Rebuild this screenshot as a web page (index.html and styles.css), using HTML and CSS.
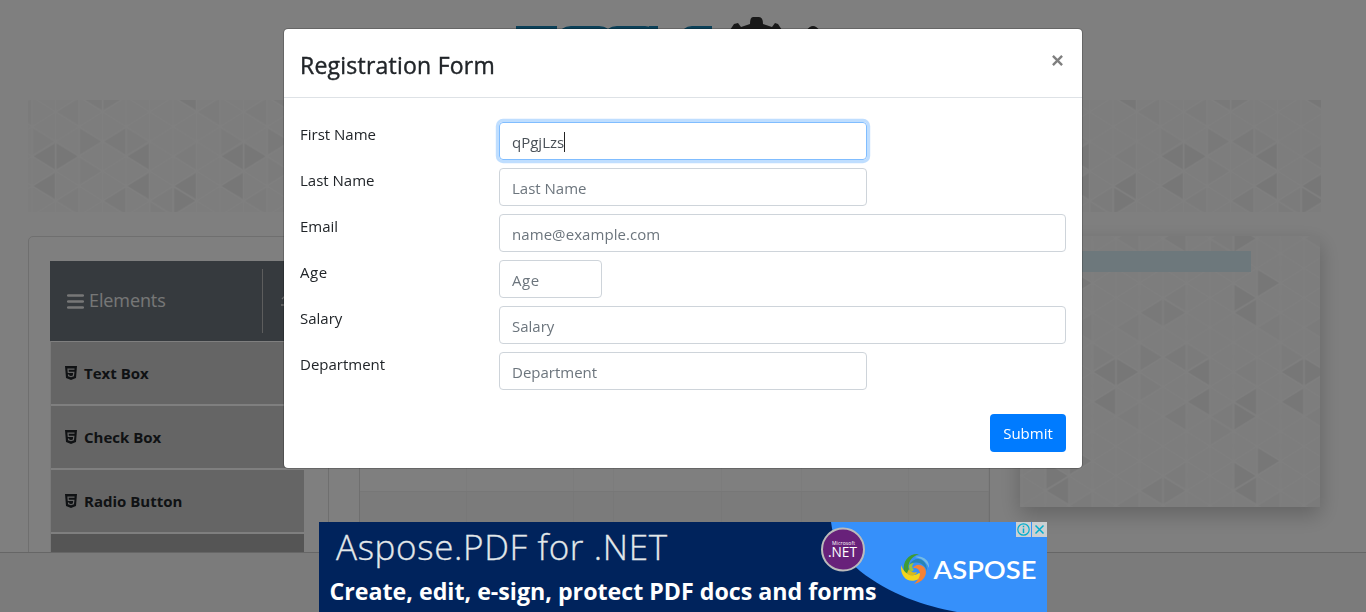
FILE: index.html
```html
<!DOCTYPE html>
<html lang="en">
<head>
<meta charset="utf-8">
<title>Web Tables</title>
<link rel="stylesheet" href="styles.css">
</head>
<body>
<svg class="defs" width="0" height="0" aria-hidden="true">
  <defs>
    <path id="tl" d="M1 0L22.7-12.800V12.800Z"/>
    <path id="tr" d="M-1 0L-22.700-12.800V12.800Z"/>
    <g id="tile">
      <g fill="#eeeeee">
        <use href="#tl" x="0" y="103.83"/><use href="#tr" x="47" y="103.83"/>
        <use href="#tl" x="0" y="133.5"/><use href="#tl" x="94" y="103.83"/>
        <use href="#tl" x="94" y="133.5"/><use href="#tl" x="141" y="133.5"/>
        <use href="#tr" x="164.5" y="148.33"/><use href="#tl" x="141" y="44.5"/>
        <use href="#tr" x="164.5" y="29.67"/><use href="#tr" x="188" y="14.83"/>
      </g>
      <g fill="#f2f2f2">
        <use href="#tl" x="70.5" y="148.33"/><use href="#tl" x="70.5" y="89"/>
        <use href="#tr" x="70.5" y="89"/><use href="#tl" x="47" y="44.5"/>
        <use href="#tr" x="94" y="44.5"/>
      </g>
      <g fill="#f7f7f7">
        <use href="#tl" x="70.5" y="29.67"/><use href="#tl" x="23.5" y="59.33"/>
        <use href="#tr" x="23.5" y="89"/><use href="#tr" x="117.5" y="89"/>
        <use href="#tl" x="141" y="103.83"/><use href="#tr" x="70.5" y="118.67"/>
        <use href="#tl" x="117.5" y="148.33"/><use href="#tl" x="23.5" y="148.33"/>
        <use href="#tl" x="164.5" y="59.33"/><use href="#tr" x="141" y="163.17"/>
      </g>
    </g>
    <pattern id="p1" width="188" height="178" patternUnits="userSpaceOnUse" patternTransform="translate(4.2 -47.5)"><use href="#tile"/></pattern>
    <pattern id="p2" width="188" height="178" patternUnits="userSpaceOnUse" patternTransform="translate(72.5 32.2)"><use href="#tile"/></pattern>
    <g id="mesh" fill="none" stroke="#ffffff" stroke-width="1.2"><path d="M0 14.83L23.5 0L47 14.83L23.5 29.67ZM0 0V29.67M47 0V29.67M23.5 0V29.67"/></g>
    <pattern id="m1" width="47" height="29.667" patternUnits="userSpaceOnUse" patternTransform="translate(4.2 -47.5)"><use href="#mesh"/></pattern>
    <pattern id="m2" width="47" height="29.667" patternUnits="userSpaceOnUse" patternTransform="translate(72.5 32.2)"><use href="#mesh"/></pattern>
    <symbol id="html5" viewBox="0 0 12 14"><path fill="#212529" d="M0 0H12L11 12L6 14L1 12Z"/><path fill="none" stroke="#cacaca" stroke-width="1.2" d="M9.500 3.200H3L3.300 6.400H8.800L8.400 9.800L6 10.700L3.600 9.800L3.500 8.500"/></symbol>
  </defs>
</svg>

<div class="page">
  <header class="top">
    <svg class="logo" width="310" height="60" viewBox="0 0 310 60">
      <path fill="#1680b0" d="M1 10H42V18H1ZM44 34V20Q45 10 56 10H84Q95 10 96 20V34ZM90 34V20Q91 10 102 10H130Q141 10 142 20V34ZM134 10H143V34H134ZM167 34V20Q167 10 177 10H197V18H197V34Z"/>
      <path fill="#333" d="M235 8Q235 1 238 1H244Q248 1 248 8L257 11L260 7L263 8L267 14H215L219 8L223 7L226 11L235 8ZM217 13H267V40H217ZM291 15Q298 5 305 15L315 40H281Z"/>
    </svg>
  </header>
  <div class="banner"><svg width="1293" height="112"><rect width="1293" height="112" fill="#fafafa"/><rect width="1293" height="112" fill="url(#p1)"/><rect width="1293" height="112" fill="url(#m1)"/></svg></div>
  <main class="cols">
    <nav class="side">
      <div class="group">
        <svg width="17" height="15" viewBox="0 0 17 15"><path stroke="#eee" stroke-width="2.5" stroke-linecap="round" d="M1.200 1.500H15.800M1.200 7.500H15.800M1.200 13.500H15.800"/></svg>
        <span class="gname">Elements</span>
        <span class="toggle"><svg width="14" height="14" viewBox="0 0 14 14"><path fill="none" stroke="#ddd" stroke-width="1.3" d="M1 5L6 0L11 5M0 11H12"/></svg></span>
      </div>
      <ul class="menu">
        <li><svg class="h5"><use href="#html5"/></svg><span>Text Box</span></li>
        <li><svg class="h5"><use href="#html5"/></svg><span>Check Box</span></li>
        <li><svg class="h5"><use href="#html5"/></svg><span>Radio Button</span></li>
        <li class="active"></li>
      </ul>
    </nav>
    <section class="table">
      <div class="cells"><i></i><i></i><i></i><i></i><i></i><i></i><i></i></div>
      <div class="cells alt"><i></i><i></i><i></i><i></i><i></i><i></i><i></i></div>
    </section>
    <aside class="promo"><svg width="300" height="271"><rect width="300" height="271" fill="#fafafa"/><rect width="300" height="271" fill="url(#p2)"/><rect width="300" height="271" fill="url(#m2)"/><rect x="40" y="15" width="191" height="21" fill="#dbf0f8"/></svg></aside>
  </main>
</div>
<footer class="foot"></footer>

<div class="overlay">
  <div class="modal">
    <div class="mhead"><h1>Registration Form</h1><svg class="close" width="11" height="11" viewBox="0 0 12 12"><path stroke="#7f7f7f" stroke-width="2.6" d="M1 1L11 11M11 1L1 11"/></svg></div>
    <form class="mbody">
      <div class="row"><label>First Name</label><div class="field mid focus"><span class="typed">qPgjLzs</span><span class="caret"></span></div></div>
      <div class="row"><label>Last Name</label><div class="field mid">Last Name</div></div>
      <div class="row"><label>Email</label><div class="field email">name@example.com</div></div>
      <div class="row"><label class="age">Age</label><div class="field small age">Age</div></div>
      <div class="row"><label>Salary</label><div class="field">Salary</div></div>
      <div class="row"><label>Department</label><div class="field mid">Department</div></div>
      <div class="actions"><button type="button">Submit</button></div>
    </form>
  </div>
</div>

<div class="ad">
  <svg width="728" height="90" viewBox="0 0 728 90">
    <rect width="728" height="90" fill="#00235c"/>
    <path fill="#3690fa" d="M512 0C514 18 523 34 541 49C570 72 605 84 638 90H728V0Z"/>
    <text class="t1" x="17" y="38" textLength="331">Aspose.PDF for .NET</text>
    <text class="t2" x="10.5" y="78" textLength="547" lengthAdjust="spacingAndGlyphs">Create, edit, e-sign, protect PDF docs and forms</text>
    <circle cx="524" cy="27.5" r="21" fill="#68217a" stroke="#bbb" stroke-width="2"/>
    <text class="t3" x="513" y="23" textLength="23">Microsoft</text>
    <text class="t4" x="509" y="35" textLength="29" lengthAdjust="spacingAndGlyphs">.NET</text>
    <g>
      <path fill="#3f9b35" d="M600 32C590 31 583 39 585 50C587 53 590 51 590 48C588 41 592 35 600 32Z"/>
      <path fill="#9bc43b" d="M592 50C588 44 590 39 597 39C593 42 592 45 595 48Z"/>
      <path fill="#f3d51b" d="M582 43C581 56 590 62 600 57C603 55 603 52 600 51C593 56 585 52 582 43Z"/>
      <path fill="#d8b91a" d="M588 51C591 55 597 54 598 50C595 51 591 50 590 47Z"/>
      <path fill="#f58235" d="M595 62C605 60 610 51 605 45C600 41 596 43 594 46C601 45 605 53 595 62Z"/>
      <path fill="#2785b5" d="M590 43C596 33 608 36 608 49C605 41 597 38 590 43Z"/>
      <path fill="#75bce4" d="M596 35C604 33 611 39 610 46C607 39 602 36 596 35Z"/>
    </g>
    <text class="t5" x="614.5" y="56.500" textLength="103" lengthAdjust="spacingAndGlyphs">ASPOSE</text>
    <path fill="#ccd0d2" d="M697 0H712V15H697ZM713 0H728V15H713Z"/>
    <g stroke="#00aecd" fill="none"><circle cx="704.500" cy="7.500" r="5.700" stroke-width="1.200"/><path stroke-width="1.500" d="M704.500 6.500V11M704.500 3.800V5.200M716.500 3.500L724.500 11.500M724.500 3.500L716.500 11.500"/></g>
  </svg>
</div>
</body>
</html>
```

FILE: styles.css
```css
* { box-sizing: border-box; }
html, body { height: 100%; }
body {
  margin: 0;
  overflow: hidden;
  background: #fff;
  color: #212529;
  font-family: "Open Sans", "Noto Sans", sans-serif;
  font-size: 15px;
  line-height: 24px;
}
svg { display: block; flex: none; }
.defs { position: absolute; }
.page { height: 552px; overflow: hidden; }
.top { height: 100px; padding: 16px 0 0 515px; }
.banner { margin-left: 28px; height: 112px; }
.cols { display: flex; align-items: flex-start; gap: 30px; margin: 24px 0 0 28px; }
.side { width: 301px; height: 400px; padding: 24px 24px 0 21px; border: 1px solid #dedede; border-radius: 5px; }
.group { display: flex; align-items: center; height: 80px; padding: 8px 0 8px 17px; background: #6c757d; color: #eee; font-size: 18px; }
.gname { margin: -2px 0 0 5px; width: 173px; letter-spacing: -.1px; }
.toggle { display: flex; align-items: center; height: 64px; padding-left: 18px; border-left: 1px solid #bbb; }
.menu { list-style: none; margin: 0; padding: 1px 0 0; border-left: 1px solid #f3f3f3; }
.menu li { display: flex; align-items: center; height: 62px; margin-bottom: 2px; padding-left: 14px; background: #cbcbcb; font-size: 15px; font-weight: 700; }
.menu .active { background: #aaa; }
.h5 { width: 12px; height: 14px; margin-right: 7px; }
.table { width: 631px; height: 400px; border: solid #dedede; border-width: 0 1px; }
.cells { display: grid; grid-template-columns: 107px 107px 40px 108px 80px 107px 80px; height: 255px; }
.cells i { border-right: 1px solid #f8f8f8; }
.cells.alt { border-top: 1px solid #eee; background: #f7f7f7; height: 145px; }
.cells.alt i { border-color: #f0f0f0; }
.promo { width: 300px; height: 271px; box-shadow: 0 8px 20px rgba(0, 0, 0, .22); }
.foot { height: 60px; border-top: 1px solid #ccc; background: #f7f7f7; }

.overlay { position: fixed; inset: 0; display: flex; justify-content: center; align-items: flex-start; padding-top: 28px; background: rgba(0, 0, 0, .5); }
.modal { width: 800px; background: #fff; background-clip: padding-box; border: 1px solid rgba(0, 0, 0, .2); border-radius: 5px; }
.mhead { display: flex; justify-content: space-between; height: 69px; padding: 16px; border-bottom: 1px solid #dee2e6; }
.mhead h1 { margin: 0; font-size: 23px; line-height: 40px; font-weight: 500; letter-spacing: .23px; -webkit-text-stroke: .4px #212529; }
.close { margin: 10px 3px 0 0; }
.mbody { margin: 0; padding: 16px; }
.row { display: grid; grid-template-columns: 199px 1fr; margin-top: 8px; height: 38px; }
.field { display: flex; align-items: center; height: 38px; padding: 2px 12px 0; border: 1px solid #ced4da; border-radius: 4px; color: #6c757d; }
.mid { width: 368px; }
.small { width: 103px; }
.email { letter-spacing: .07px; }
.age { letter-spacing: .5px; }
.focus { border-color: #80bdff; color: #495057; box-shadow: 0 0 0 3.2px rgba(0, 123, 255, .25); }
.caret { width: 1px; height: 20px; background: #222; }
.actions { display: flex; justify-content: flex-end; margin-top: 24px; }
.actions button { width: 76px; height: 38px; padding: 0; border: 0; border-radius: 4px; background: #007bff; color: #fff; font: inherit; }

.ad { position: fixed; left: 319px; bottom: 0; width: 728px; height: 90px; }
.ad text { fill: #fff; }
.ad .t1 { font-size: 35px; font-weight: 300; fill: #e3e8ea; stroke: #e3e8ea; stroke-width: .3px; }
.ad .t2 { font-size: 23px; font-weight: 700; }
.ad .t3 { font-size: 5px; }
.ad .t4 { font-size: 14px; }
.ad .t5 { font: 600 24.5px Lato, sans-serif; }
```
